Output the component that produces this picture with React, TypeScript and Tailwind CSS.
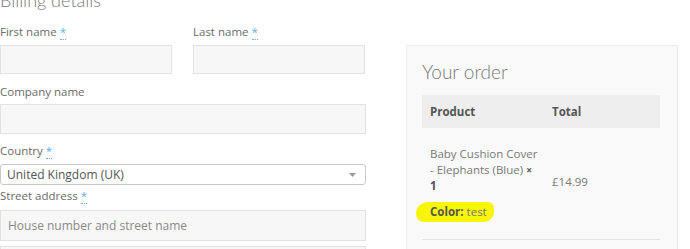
import React from "react";

const body = { fontFamily: '"Open Sans", "Liberation Sans", sans-serif' };
const head = { fontFamily: 'Lato, "Open Sans", sans-serif' };

function Req() {
  return (
    <abbr className="ml-[3px] text-[#5fb0e0] no-underline border-b border-dotted border-[#5fb0e0]" title="required">
      *
    </abbr>
  );
}

function Label({ children, req }: { children: React.ReactNode; req?: boolean }) {
  return (
    <div className="h-[16px] text-[11.5px] leading-[16px] text-[#6b6b6b] whitespace-nowrap">
      {children}
      {req && <Req />}
    </div>
  );
}

function Input({ h = 29, placeholder }: { h?: number; placeholder?: string }) {
  return (
    <div
      className="border border-[#e2e2e2] bg-[#f7f7f7] px-[7px] flex items-center text-[12px] text-[#8a8a8a]"
      style={{ height: h }}
    >
      {placeholder}
    </div>
  );
}

export default function App() {
  return (
    <div className="w-[690px] h-[249px] overflow-hidden bg-white" style={body}>
      <div className="flex">
        {/* Left column: billing */}
        <div className="w-[366px] shrink-0">
          <div
            className="-mt-[12px] h-[24px] text-[18px] leading-[24px] text-[#7a7a7a] font-light whitespace-nowrap"
            style={head}
          >
            Billing details
          </div>
          <div className="mt-[12px] flex gap-[21px]">
            <div className="w-[172px]">
              <Label req>First name</Label>
              <div className="mt-[5px]">
                <Input />
              </div>
            </div>
            <div className="w-[172px]">
              <Label req>Last name</Label>
              <div className="mt-[5px]">
                <Input />
              </div>
            </div>
          </div>
          <div className="mt-[10px]">
            <Label>Company name</Label>
            <div className="mt-[4px]">
              <Input h={30} />
            </div>
          </div>
          <div className="mt-[9px]">
            <Label req>Country</Label>
            <div className="mt-[5px] h-[21px] rounded-[3px] border border-[#c9c9c9] bg-white flex items-center justify-between pl-[6px] pr-[9px]">
              <span className="text-[12px] text-[#555]">United Kingdom (UK)</span>
              <svg width="7" height="4" viewBox="0 0 7 4">
                <path d="M0 0h7L3.5 4z" fill="#999" />
              </svg>
            </div>
          </div>
          <div className="mt-[3px]">
            <Label req>Street address</Label>
            <div className="mt-[6px]">
              <Input h={31} placeholder="House number and street name" />
            </div>
            <div className="mt-[5px]">
              <Input h={30} />
            </div>
          </div>
        </div>

        {/* Right column: order */}
        <div className="ml-[40px] mt-[45px] w-[272px] shrink-0 border border-[#ececec] bg-[#f9f9f9] pl-[15px] pr-[17px] pt-[14px] h-[260px]">
          <div className="text-[19px] leading-[24px] text-[#7a7a7a] font-light" style={head}>
            Your order
          </div>
          <div className="mt-[11px]">
            <div className="flex h-[33px] items-center bg-[#eeeeee] text-[11.5px] font-bold text-[#555]">
              <div className="w-[122px] pl-[8px]">Product</div>
              <div className="pl-[8px]">Total</div>
            </div>
            <div className="flex border-b border-[#e3e3e3] pt-[18px] pb-[19px] text-[11.5px] text-[#7a7a7a]">
              <div className="w-[122px] shrink-0 pl-[8px]">
                <div className="leading-[16px]">
                  <div>Baby Cushion Cover</div>
                  <div className="whitespace-nowrap">
                    - Elephants (Blue)&nbsp;<strong className="text-[#555] text-[10px]">×</strong>
                  </div>
                  <div>
                    <strong className="text-[#555]">1</strong>
                  </div>
                </div>
                <div className="mt-[10px] leading-[16px]">
                  <span className="-ml-[14px] inline-block rounded-tl-[12px] rounded-bl-[8px] rounded-tr-[6px] rounded-br-[10px] bg-[#f9f509] pl-[14px] pr-[7px] py-[2px] -my-[2px]">
                    <strong className="text-[#555]">Color:</strong> test
                  </span>
                </div>
              </div>
              <div className="pl-[8px] pt-[28px] leading-[16px]">£14.99</div>
            </div>
          </div>
        </div>
      </div>
    </div>
  );
}
